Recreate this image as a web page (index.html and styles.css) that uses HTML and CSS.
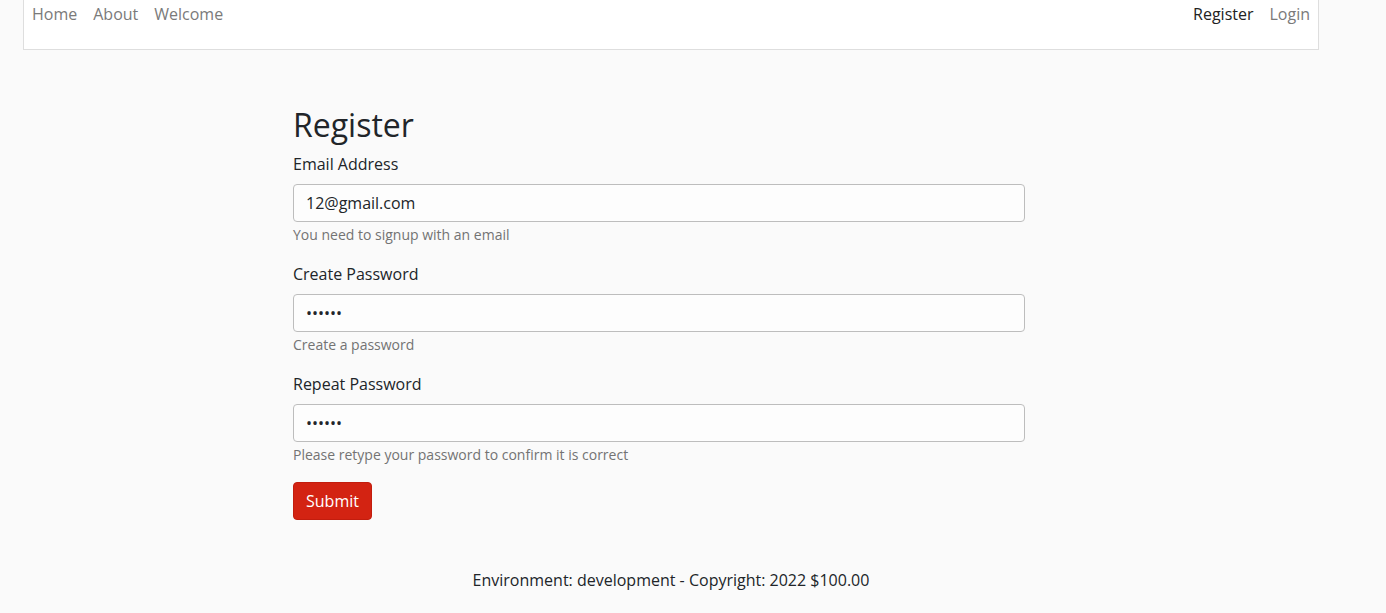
FILE: index.html
```html
<!DOCTYPE html>
<html>
<head>
<meta charset="utf-8">
<link rel="stylesheet" href="styles.css">
</head>
<body>
<div class="page">
  <nav class="navbar">
    <div class="nav-group">
      <a class="nav-link" href="#">Home</a>
      <a class="nav-link" href="#">About</a>
      <a class="nav-link" href="#">Welcome</a>
    </div>
    <div class="nav-group">
      <a class="nav-link active" href="#">Register</a>
      <a class="nav-link" href="#">Login</a>
    </div>
  </nav>
  <main class="main">
    <form class="form">
      <h1 class="title">Register</h1>
      <div class="group">
        <label class="label">Email Address</label>
        <input class="input" type="text" value="12@gmail.com">
        <div class="help">You need to signup with an email</div>
      </div>
      <div class="group">
        <label class="label">Create Password</label>
        <input class="input" type="password" value="123456">
        <div class="help">Create a password</div>
      </div>
      <div class="group">
        <label class="label">Repeat Password</label>
        <input class="input" type="password" value="123456">
        <div class="help">Please retype your password to confirm it is correct</div>
      </div>
      <button class="btn" type="button">Submit</button>
    </form>
  </main>
  <footer class="footer">Environment: development - Copyright: 2022 $100.00</footer>
</div>
</body>
</html>
```
FILE: styles.css
```css
* { box-sizing: border-box; }
html, body { margin: 0; padding: 0; }
body {
  background: #fafafa;
  font-family: "Open Sans", "Liberation Sans", sans-serif;
  font-size: 16px;
  line-height: 1.5;
  color: #212529;
}
.page { width: 1342px; }
.navbar {
  margin: 0 23px;
  height: 50px;
  background: #fff;
  border: 1px solid #dedede;
  border-top: none;
  display: flex;
  justify-content: space-between;
  align-items: flex-start;
  padding: 2px 0 0 0;
}
.nav-group { display: flex; }
.nav-link {
  color: #7a7a7a;
  text-decoration: none;
  padding: 0 8px;
}
.nav-link.active { color: #222; }
.main { padding: 56px 0 0 293px; }
.form { width: 732px; }
.title {
  font-size: 32px;
  font-weight: 400;
  line-height: 38px;
  margin: 0 0 8px 0;
  color: #212529;
}
.group { margin-bottom: 17px; }
.label { display: block; margin-bottom: 8px; }
.input {
  display: block;
  width: 100%;
  height: 38px;
  padding: 6px 12px;
  font-family: inherit;
  font-size: 16px;
  color: #212529;
  background: #fdfdfd;
  border: 1px solid #bdbdbd;
  border-radius: 4px;
  outline: none;
}
.help {
  margin-top: 2px;
  font-size: 14px;
  line-height: 21px;
  color: #737373;
}
.btn {
  display: block;
  height: 38px;
  padding: 0 12px;
  font-family: inherit;
  font-size: 16px;
  color: #fff;
  background: #d32312;
  border: 1px solid #c21d0e;
  border-radius: 4px;
}
.footer {
  text-align: center;
  margin-top: 48px;
  line-height: 24px;
  color: #212529;
}
```
